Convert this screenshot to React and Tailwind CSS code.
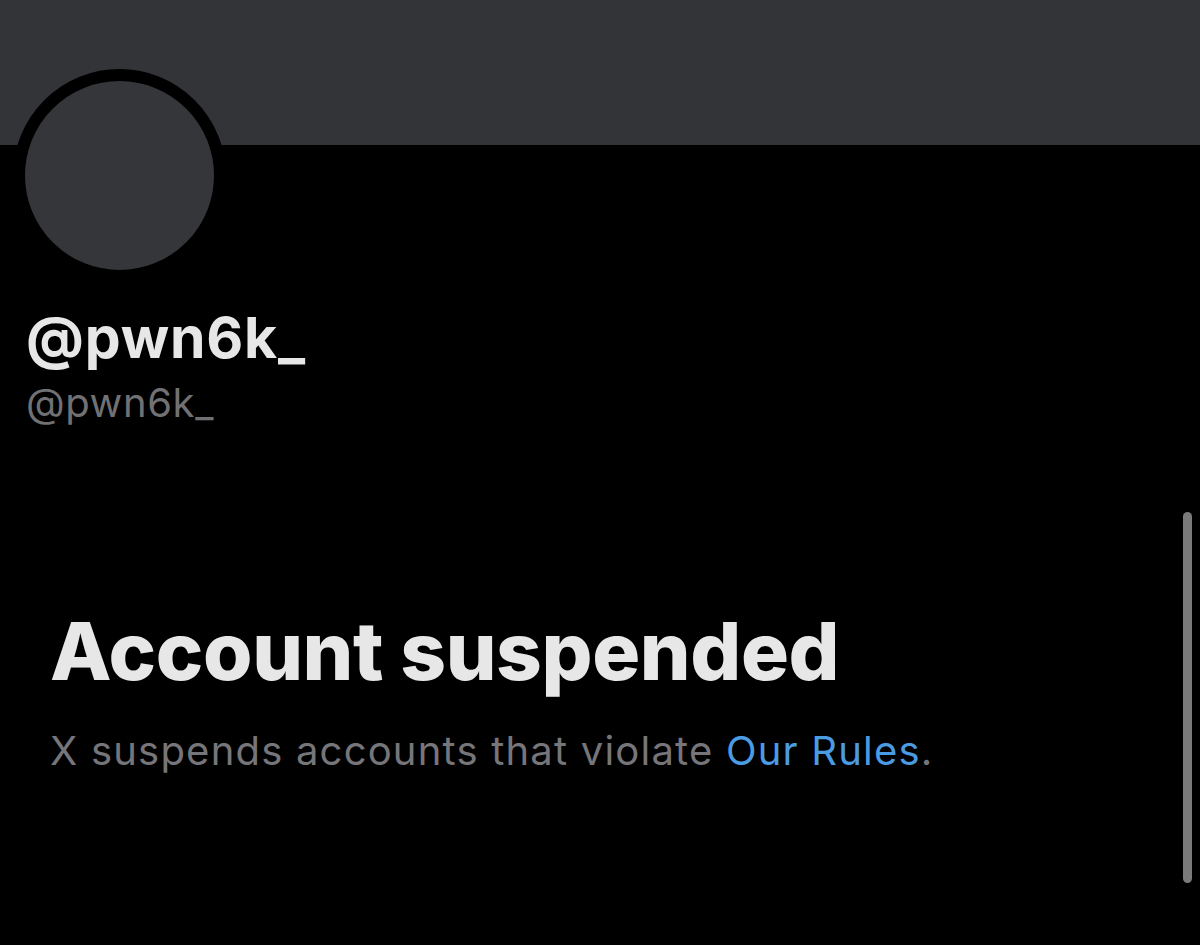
export default function App() {
  return (
    <div className="relative w-[1200px] h-[945px] overflow-hidden bg-black" style={{ fontFamily: 'Inter, "Liberation Sans", sans-serif' }}>
      <div className="h-[145px] bg-[#333438]" />

      <div className="pl-[13px]">
        <div className="-mt-[76px] w-[213px] h-[213px] rounded-full bg-[#35363a] border-[12.5px] border-black" />
      </div>

      <div className="pl-[26px] pt-[24px]">
        <h1 className="text-[57px] leading-[64px] font-bold text-[#e7e7e7] tracking-[0.8px]">@pwn6k_</h1>
        <p className="mt-[9px] text-[40px] leading-[48px] text-[#717174] tracking-[0.6px]">@pwn6k_</p>
      </div>

      <div className="pl-[50px] pt-[178px]">
        <h2 className="text-[80px] leading-[92px] font-extrabold text-[#e7e7e7] tracking-[-0.4px]">Account suspended</h2>
        <p className="mt-[30px] text-[40px] leading-[48px] text-[#76767a] tracking-[1.2px]">
          X suspends accounts that violate <span className="text-[#4b9be3]">Our Rules</span>.
        </p>
      </div>

      <div className="absolute left-[1183px] top-[512px] w-[9px] h-[371px] rounded-full bg-[#7a7a7a]" />
    </div>
  )
}
